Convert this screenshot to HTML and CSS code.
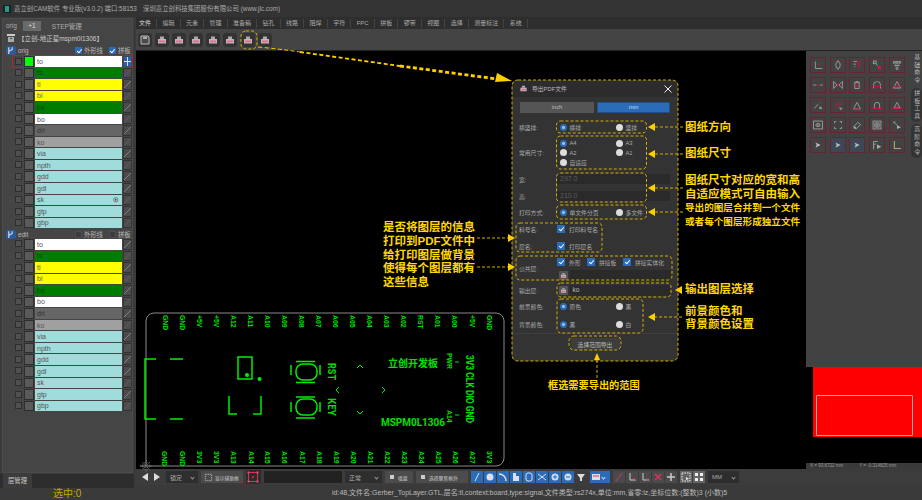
FILE: index.html
```html
<!DOCTYPE html>
<html lang="zh">
<head>
<meta charset="utf-8">
<title>嘉立创CAM软件</title>
<link rel="stylesheet" href="styles.css">
</head>
<body>
<svg class="defs" width="0" height="0">
  <symbol id="pr" viewBox="0 0 14 14">
    <path d="M5 3.500h4v2.500h-4z" fill="#aaa"/>
    <path d="M3 6h8v4.500h-8z" fill="#bbb"/>
    <path d="M4 7.500h6v1.800h-6z" fill="#e8688e"/>
  </symbol>
  <symbol id="cur" viewBox="0 0 16 16"><path d="M5 5l6 3-6 3 1.500-3z" fill="#bbb"/></symbol>
</svg>
<div class="app">
  <header class="title">
    <svg class="logo" viewBox="0 0 8 8"><rect width="8" height="8" fill="#123"/><rect x="2" y="1" width="4" height="6" fill="#2a9a7a"/></svg>
    <span class="t1">嘉立创CAM软件 专业版(v3.0.2) 端口:58153</span>
    <span>深圳嘉立创科技集团股份有限公司 (www.jlc.com)</span>
  </header>
  <div class="main">
    <aside class="left">
      <div class="panel">
        <div class="ptabs"><span>orig</span><b class="plus">+1</b><span>STEP管理</span></div>
        <div class="job">
          <svg class="job-ic" viewBox="0 0 8 8"><path d="M0 0h8v2H0z" fill="#ccc"/><path d="M1 3h6v5H1z" fill="#aaa"/><path d="M3 4h2v1H3z" fill="#444"/></svg>
          <span>【立创-地正星mspm0l1306】</span>
        </div>
        <div class="ghead">
          <i class="branch"><svg viewBox="0 0 8 8"><path d="M2.500 1v6M5.500 1v2L2.500 5" stroke="#dde" fill="none"/></svg></i>
          <span class="gname">orig</span>
          <i class="cb on"></i><span class="gl">外形线</span>
          <i class="cb on"></i><span class="gl">拼板</span>
        </div>
        <div class="layer sel"><i class="ck"></i><i class="sw lime"></i><span class="bar w">to</span><i class="rt grid"></i></div>
        <div class="layer"><i class="ck"></i><i class="sw"></i><span class="bar g">ts</span><i class="rt"></i></div>
        <div class="layer"><i class="ck"></i><i class="sw"></i><span class="bar y">tl</span><i class="rt"></i></div>
        <div class="layer"><i class="ck"></i><i class="sw"></i><span class="bar y">bl</span><i class="rt"></i></div>
        <div class="layer"><i class="ck"></i><i class="sw"></i><span class="bar g">bs</span><i class="rt"></i></div>
        <div class="layer"><i class="ck"></i><i class="sw"></i><span class="bar w">bo</span><i class="rt"></i></div>
        <div class="layer"><i class="ck"></i><i class="sw"></i><span class="bar d">drl</span><i class="rt"></i></div>
        <div class="layer"><i class="ck"></i><i class="sw"></i><span class="bar s">ko</span><i class="rt"></i></div>
        <div class="layer"><i class="ck"></i><i class="sw"></i><span class="bar c">via</span><i class="rt"></i></div>
        <div class="layer"><i class="ck"></i><i class="sw"></i><span class="bar c">npth</span><i class="rt"></i></div>
        <div class="layer"><i class="ck"></i><i class="sw"></i><span class="bar c">gdd</span><i class="rt"></i></div>
        <div class="layer"><i class="ck"></i><i class="sw"></i><span class="bar c">gdl</span><i class="rt"></i></div>
        <div class="layer"><i class="ck"></i><i class="sw"></i><span class="bar c"><span>sk</span><svg class="tgt" viewBox="0 0 6 6"><circle cx="3" cy="3" r="2.400" fill="none" stroke="#555" stroke-width=".7"/><circle cx="3" cy="3" r="1" fill="#555"/></svg></span><i class="rt"></i></div>
        <div class="layer"><i class="ck"></i><i class="sw"></i><span class="bar c">gtp</span><i class="rt"></i></div>
        <div class="layer"><i class="ck"></i><i class="sw"></i><span class="bar c">gbp</span><i class="rt"></i></div>
        <div class="ghead edit">
          <i class="branch"><svg viewBox="0 0 8 8"><path d="M2.500 1v6M5.500 1v2L2.500 5" stroke="#dde" fill="none"/></svg></i>
          <span class="gname">edit</span>
          <i class="cb"></i><span class="gl">外形线</span>
          <i class="cb"></i><span class="gl">拼板</span>
        </div>
        <div class="layer"><i class="ck"></i><i class="sw"></i><span class="bar w">to</span><i class="rt"></i></div>
        <div class="layer"><i class="ck"></i><i class="sw"></i><span class="bar g">ts</span><i class="rt"></i></div>
        <div class="layer"><i class="ck"></i><i class="sw"></i><span class="bar y">tl</span><i class="rt"></i></div>
        <div class="layer"><i class="ck"></i><i class="sw"></i><span class="bar y">bl</span><i class="rt"></i></div>
        <div class="layer"><i class="ck"></i><i class="sw"></i><span class="bar g">bs</span><i class="rt"></i></div>
        <div class="layer"><i class="ck"></i><i class="sw"></i><span class="bar w">bo</span><i class="rt"></i></div>
        <div class="layer"><i class="ck"></i><i class="sw"></i><span class="bar d">drl</span><i class="rt"></i></div>
        <div class="layer"><i class="ck"></i><i class="sw"></i><span class="bar s">ko</span><i class="rt"></i></div>
        <div class="layer"><i class="ck"></i><i class="sw"></i><span class="bar c">via</span><i class="rt"></i></div>
        <div class="layer"><i class="ck"></i><i class="sw"></i><span class="bar c">npth</span><i class="rt"></i></div>
        <div class="layer"><i class="ck"></i><i class="sw"></i><span class="bar c">gdd</span><i class="rt"></i></div>
        <div class="layer"><i class="ck"></i><i class="sw"></i><span class="bar c">gdl</span><i class="rt"></i></div>
        <div class="layer"><i class="ck"></i><i class="sw"></i><span class="bar c">sk</span><i class="rt"></i></div>
        <div class="layer"><i class="ck"></i><i class="sw"></i><span class="bar c">gtp</span><i class="rt"></i></div>
        <div class="layer"><i class="ck"></i><i class="sw"></i><span class="bar c">gbp</span><i class="rt"></i></div>
      </div>
      <div class="ltabs"><span class="ltab">层管理</span></div>
      <div class="count">选中:0</div>
    </aside>
    <div class="center">
      <nav class="tabs">
        <span class="tab first">文件</span><span class="tab">编辑</span><span class="tab">元素</span><span class="tab">管理</span><span class="tab">准备稿</span><span class="tab">钻孔</span><span class="tab">线路</span><span class="tab">阻焊</span><span class="tab">字符</span><span class="tab">FPC</span><span class="tab">拼板</span><span class="tab">锣带</span><span class="tab">视图</span><span class="tab">选择</span><span class="tab">测量标注</span><span class="tab">系统</span>
      </nav>
      <div class="tools">
        <span class="tbtn"><svg viewBox="0 0 14 14"><path d="M3 3h7l1 1v7H3z" fill="#4a4a4a" stroke="#bbb"/><path d="M5 3.500h4v2.500h-4z" fill="#aaa"/></svg></span>
        <span class="tbtn"><svg><use href="#pr"/></svg></span>
        <span class="tbtn"><svg><use href="#pr"/></svg></span>
        <span class="tbtn"><svg><use href="#pr"/></svg></span>
        <span class="tbtn"><svg><use href="#pr"/></svg></span>
        <span class="tbtn"><svg><use href="#pr"/></svg></span>
        <span class="tbtn far"><svg><use href="#pr"/></svg></span>
        <span class="tbtn"><svg><use href="#pr"/></svg></span>
      </div>
      <div class="work">
        <section class="canvas">
          <svg class="layer-svg" viewBox="136 51 670 418">
            <path class="outline" d="M146 466V321a8 8 0 0 1 8-8H496a8 8 0 0 1 8 8V458a8 8 0 0 1-8 8H140"/>
            <g class="gear"><circle cx="146" cy="466" r="3.500"/><path d="M146 460v12M140 466h12M142 462l8 8M150 462l-8 8"/></g>
            <g class="pin">
              <text transform="translate(163 315) rotate(90)">GND</text>
              <text transform="translate(180 315) rotate(90)">GND</text>
              <text transform="translate(197 315) rotate(90)">+5V</text>
              <text transform="translate(214 315) rotate(90)">+5V</text>
              <text transform="translate(231 315) rotate(90)">A12</text>
              <text transform="translate(248 315) rotate(90)">A11</text>
              <text transform="translate(265 315) rotate(90)">A10</text>
              <text transform="translate(282 315) rotate(90)">A09</text>
              <text transform="translate(299 315) rotate(90)">A08</text>
              <text transform="translate(316 315) rotate(90)">A07</text>
              <text transform="translate(333 315) rotate(90)">A06</text>
              <text transform="translate(350 315) rotate(90)">A05</text>
              <text transform="translate(367 315) rotate(90)">A04</text>
              <text transform="translate(384 315) rotate(90)">A03</text>
              <text transform="translate(401 315) rotate(90)">A02</text>
              <text transform="translate(418 315) rotate(90)">RST</text>
              <text transform="translate(435 315) rotate(90)">A01</text>
              <text transform="translate(452 315) rotate(90)">A00</text>
              <text transform="translate(470 315) rotate(90)">+5V</text>
              <text transform="translate(487 315) rotate(90)">GND</text>
              <text transform="translate(162 451) rotate(90)">GND</text>
              <text transform="translate(180 451) rotate(90)">GND</text>
              <text transform="translate(197 451) rotate(90)">3V3</text>
              <text transform="translate(214 451) rotate(90)">3V3</text>
              <text transform="translate(231 451) rotate(90)">A13</text>
              <text transform="translate(249 451) rotate(90)">A14</text>
              <text transform="translate(265 451) rotate(90)">A15</text>
              <text transform="translate(282 451) rotate(90)">A16</text>
              <text transform="translate(300 451) rotate(90)">A17</text>
              <text transform="translate(317 451) rotate(90)">A18</text>
              <text transform="translate(334 451) rotate(90)">A19</text>
              <text transform="translate(351 451) rotate(90)">A20</text>
              <text transform="translate(368 451) rotate(90)">A21</text>
              <text transform="translate(385 451) rotate(90)">A22</text>
              <text transform="translate(402 451) rotate(90)">A23</text>
              <text transform="translate(419 451) rotate(90)">A24</text>
              <text transform="translate(436 451) rotate(90)">A25</text>
              <text transform="translate(453 451) rotate(90)">A26</text>
              <text transform="translate(470 451) rotate(90)">A27</text>
              <text transform="translate(487 451) rotate(90)">3V3</text>
              <text transform="translate(447 353) rotate(90)">PWR</text>
              <text transform="translate(447 410) rotate(90)">A14</text>
            </g>
            <g class="silk">
              <path d="M156 359H145V419H156M170 359H183M170 419H183"/>
              <path d="M238 357H252V379H238Z"/>
              <path d="M229 396V414H237M261 396V414H253"/>
              <rect x="296" y="364" width="21" height="16" rx="7"/>
              <rect x="296" y="399" width="21" height="16" rx="7"/>
              <path d="M296 361.500H315M296 382.500H315M291 365V375M320 365V375M296 397H315M296 418H315M291 402V412M320 402V412"/>
              <path class="fine" d="M357 368l3-3 3 3M357 411l3 3 3-3M339 387l-3 3 3 3M382 387l3 3-3 3M455 362h4M455 415h4"/>
            </g>
            <circle class="dot" cx="247" cy="375" r="2"/>
            <circle class="dot" cx="259.500" cy="379" r="2"/>
            <text class="big cn" x="388" y="367">立创开发板</text>
            <text class="big" x="381" y="426" textLength="64" lengthAdjust="spacingAndGlyphs">MSPM0L1306</text>
            <text class="big" transform="translate(328 363) rotate(90)" textLength="17" lengthAdjust="spacingAndGlyphs">RST</text>
            <text class="big" transform="translate(328 398) rotate(90)" textLength="18" lengthAdjust="spacingAndGlyphs">KEY</text>
            <text class="big" transform="translate(466 355) rotate(90)" textLength="68" lengthAdjust="spacingAndGlyphs">3V3 CLK DIO GND</text>
          </svg>

          <div class="dialog">
            <div class="dtitle">
              <svg class="dic"><use href="#pr"/></svg>
              <span>导出PDF文件</span>
              <svg class="close" viewBox="0 0 8 8"><path d="M.5.500l7 7M7.500.500l-7 7" stroke="#eee"/></svg>
            </div>
            <div class="units"><span class="unit">inch</span><span class="unit active">mm</span></div>
            <div class="form">
              <div class="frow h16"><label>横竖排:</label><div class="opts"><span class="opt"><i class="rd on"></i>横排</span><span class="opt"><i class="rd"></i>竖排</span></div></div>
              <div class="frow h35"><label>常用尺寸:</label>
                <div class="opts tight">
                  <span class="opt"><i class="rd on"></i>A4</span><span class="opt"><i class="rd"></i>A3</span>
                  <span class="opt"><i class="rd"></i>A2</span><span class="opt"><i class="rd"></i>A1</span>
                  <span class="opt"><i class="rd"></i>自适应</span>
                </div>
              </div>
              <div class="frow h18"><label>宽:</label><div class="inp dim">297.0</div></div>
              <div class="frow h16"><label>高:</label><div class="inp dim">210.0</div></div>
              <div class="frow h17"><label>打印方式:</label><div class="opts"><span class="opt"><i class="rd on"></i>单文件分页</span><span class="opt"><i class="rd"></i>多文件</span></div></div>
              <div class="frow h16"><label>料号名:</label><div class="chk"><span class="opt"><i class="cb on"></i>打印料号名</span></div></div>
              <div class="frow h18"><label>层名:</label><div class="chk"><span class="opt"><i class="cb on"></i>打印层名</span></div></div>
              <div class="frow h27"><label>公共层:</label>
                <div class="stack">
                  <div class="chk three"><span class="opt"><i class="cb on"></i>外形</span><span class="opt"><i class="cb on"></i>拼接板</span><span class="opt"><i class="cb on"></i>拼接实体化</span></div>
                  <div class="pick"><svg class="dic2"><use href="#pr"/></svg><div class="inp"></div></div>
                </div>
              </div>
              <div class="frow h16"><label>输出层:</label><div class="pick"><svg class="dic2"><use href="#pr"/></svg><div class="inp">ko</div></div></div>
              <div class="frow h17"><label>前景颜色:</label><div class="opts"><span class="opt"><i class="rd on"></i>原色</span><span class="opt"><i class="rd"></i>黑</span></div></div>
              <div class="frow h18"><label>背景颜色:</label><div class="opts"><span class="opt"><i class="rd on"></i>黑</span><span class="opt"><i class="rd"></i>白</span></div></div>
            </div>
            <div class="dfoot"><button class="export">选择范围导出</button></div>
          </div>

          <svg class="layer-svg" viewBox="136 51 670 418">
            <g class="dash">
              <rect x="241" y="31" width="16" height="18" rx="5"/>
              <rect x="512" y="80" width="166" height="281" rx="6"/>
              <rect x="556.500" y="121" width="90" height="12" rx="4"/>
              <rect x="556.500" y="136" width="90" height="33" rx="4"/>
              <rect x="556.500" y="173" width="90" height="29" rx="4"/>
              <rect x="556.500" y="205" width="90" height="14" rx="4"/>
              <rect x="516" y="223" width="86" height="29" rx="4"/>
              <rect x="516" y="256" width="156" height="24" rx="4"/>
              <rect x="557" y="283" width="114" height="14" rx="4"/>
              <rect x="557" y="299" width="86" height="34" rx="4"/>
              <rect x="569" y="336" width="52" height="14" rx="5"/>
              <path d="M683 127H654M683 154H654M683 188H654M683 212H654M682 290H680M682 317H654M477 238H508M477 267H508M597 378V360"/>
            </g>
            <g class="arrow">
              <path d="M258 47Q280 49 300 52" class="a1"/>
              <path d="M300 52L400 66" class="a2"/>
              <path d="M400 66L497 79" class="a3"/>
            </g>
            <g class="head">
              <path d="M497 73L512 81L495 82Z"/>
              <path d="M648 127l7-4v8zM648 154l7-4v8zM648 188l7-4v8zM648 212l7-4v8zM675 290l7-4v8zM648 317l7-4v8z"/>
              <path d="M515 238l-7-4v8zM515 267l-7-4v8z"/>
              <path d="M597 353l-3 7h6z"/>
            </g>
            <g class="note">
              <text x="685" y="131">图纸方向</text>
              <text x="685" y="157">图纸尺寸</text>
              <text x="685" y="184">图纸尺寸对应的宽和高</text>
              <text x="685" y="198">自适应模式可自由输入</text>
              <text class="nsm" x="685" y="211">导出的图层合并到一个文件</text>
              <text class="nsm" x="685" y="225">或者每个图层形成独立文件</text>
              <text x="685" y="293">输出图层选择</text>
              <text x="685" y="315">前景颜色和</text>
              <text x="685" y="328">背景颜色设置</text>
              <text x="383" y="231">是否将图层的信息</text>
              <text x="383" y="245">打印到PDF文件中</text>
              <text x="383" y="259">给打印图层做背景</text>
              <text x="383" y="272">使得每个图层都有</text>
              <text x="383" y="286">这些信息</text>
              <text class="nmd" x="548" y="389">框选需要导出的范围</text>
            </g>
          </svg>
        </section>
        <aside class="right">
          <div class="rtop">
            <div class="rgrid">
              <span class="rb"><svg viewBox="0 0 16 16"><path class="l" d="M5 4v8h8"/><circle class="r" cx="9" cy="7" r="1"/></svg></span>
              <span class="rb"><svg viewBox="0 0 16 16"><ellipse class="l" cx="8" cy="8" rx="2.500" ry="4"/><path class="l" d="M8 2.500v2M8 11.500v2"/></svg></span>
              <span class="rb"><svg viewBox="0 0 16 16"><path class="l" d="M4 4h4M4 7h3M5 10h1"/><path class="rl" d="M9.500 13V4.500H13M9.500 8.500h3"/></svg></span>
              <span class="rb"><svg viewBox="0 0 16 16"><rect class="l" x="4" y="3.500" width="3" height="3"/><rect class="rf" x="9" y="9" width="3.500" height="3.500"/><path class="l" d="M7 7l2 2"/></svg></span>
              <span class="rb"><svg viewBox="0 0 16 16"><path class="l" d="M4 4h2v2H4zM7 4h2v2H7zM10 4h2v2h-2zM5.500 8h2v1h-2zM8.500 8h2v1h-2zM7 11h2v2H7z"/></svg></span>
              <span class="rb"><svg viewBox="0 0 16 16"><path class="l" d="M2.500 8h3.500M10 8h3.500"/><path class="rl" d="M6.500 8h3"/></svg></span>
              <span class="rb"><svg viewBox="0 0 16 16"><path class="l" d="M3 4v8l4-4zM13 4v8l-4-4z"/><circle class="r" cx="8" cy="8" r="1.300"/></svg></span>
              <span class="rb"><svg viewBox="0 0 16 16"><path class="l" d="M5 5h6M7 5V4h2v1M5.500 5v7h5V5"/><path class="rl" d="M7.200 7v3.500M8.800 7v3.500"/></svg></span>
              <span class="rb"><svg viewBox="0 0 16 16"><path class="l" d="M4 12V8a4 4 0 0 1 8 0v4"/><path class="rl" d="M3 9.500h10M8 3v2.500"/></svg></span>
              <span class="rb"><svg viewBox="0 0 16 16"><path class="l" d="M8 4l4 7.500H4z"/><path class="rl" d="M3.500 9.500h9M8 5.500v3"/></svg></span>
              <span class="rb"><svg viewBox="0 0 16 16"><path class="l" d="M4 12l4-5"/><path class="rl" d="M8 7l3-3.500"/><path class="l" d="M10 10l2.500 1.500-2.500 1z"/></svg></span>
              <span class="rb"><svg viewBox="0 0 16 16"><path class="rl" d="M4 10l6-6M6 12l6-6"/><path class="l" d="M10 11l2.500 1-1.500 1.500z"/></svg></span>
              <span class="rb"><svg viewBox="0 0 16 16"><path class="l" d="M4 12.500L8 5l4 7.500z"/><path class="rl" d="M4 12.500h8"/></svg></span>
              <span class="rb"><svg viewBox="0 0 16 16"><path class="l" d="M5 12V8a3 3 0 0 1 6 0v4"/><path class="rl" d="M3 12h10"/></svg></span>
              <span class="rb"><svg viewBox="0 0 16 16"><path class="l" d="M8 5l3.500 6.500h-7z"/><path class="rl" d="M3 12h10M8 7.500v2"/></svg></span>
              <span class="rb"><svg viewBox="0 0 16 16"><rect class="l" x="3" y="3.500" width="10" height="9"/><ellipse class="l" cx="8" cy="8" rx="2.500" ry="1.800"/><circle class="g" cx="8" cy="8" r=".9"/></svg></span>
              <span class="rb"><svg viewBox="0 0 16 16"><path class="l" d="M4 4h2M4 4v2M12 4h-2M12 4v2M4 12h2M4 12v-2M12 12h-2M12 12v-2"/></svg></span>
              <span class="rb"><svg viewBox="0 0 16 16"><path class="l" d="M4 10l5-5 3 2.500-5 5z"/><circle class="g" cx="5.500" cy="11" r="1.300"/></svg></span>
              <span class="rb"><svg viewBox="0 0 16 16"><rect class="l" x="3.500" y="3.500" width="9" height="9"/><path class="l" d="M5.500 5.500h5v5h-5zM8 5.500v5M5.500 8h5"/></svg></span>
              <span class="rb"><svg viewBox="0 0 16 16"><path class="l" d="M4 4.500l4 3.500M6 3.500L4 6"/><path d="M8 8l4.500 2.500L8 12.500z" class="g"/></svg></span>
              <span class="rb"><svg><use href="#cur"/></svg></span>
              <span class="rb blue"><svg><use href="#cur"/></svg></span>
              <span class="rb blue"><svg><use href="#cur"/></svg></span>
              <span class="rb"><svg viewBox="0 0 16 16"><path class="l" d="M4 4h5M4 7h3M4 10h1M4 4v9"/><path d="M8 7.500l5 2.500-5 2.500z" class="g"/></svg></span>
              <span class="rb"><svg viewBox="0 0 16 16"><path class="tan" d="M5 3.500v8.500h7.500"/></svg></span>
            </div>
            <div class="vtabs">
              <span class="vt plain">基础命令</span>
              <span class="vt">拼板工具</span>
              <span class="vt">高阶命令</span>
            </div>
          </div>
          <div class="mini"><div class="red"><div class="redbox"></div></div></div>
          <div class="coords"><span>X = 93.6722 mm</span><span>Y = -0.314825 mm</span></div>
        </aside>
      </div>
      <div class="btools">
        <div class="grp1">
          <span class="ib"><svg viewBox="0 0 12 12"><path d="M9 2v8L3 6z" fill="#ddd"/></svg></span>
          <span class="ib"><svg viewBox="0 0 12 12"><path d="M3 2v8l6-4z" fill="#ddd"/></svg></span>
        </div>
        <span class="combo w32">锁定<i class="ch"></i></span>
        <span class="gbtn w42"><svg class="sq" viewBox="0 0 10 10"><rect x="1.500" y="1.500" width="7" height="7" fill="none" stroke="#bbb" stroke-dasharray="1.500 1"/></svg>显示辅助框</span>
        <span class="ib redb"><svg viewBox="0 0 14 14"><rect x="2.500" y="2.500" width="9" height="9" fill="none" stroke="#e0305a"/><circle cx="7" cy="7" r="1" fill="#e0305a"/><path d="M1.500 1.500h2v2h-2zM10.500 1.500h2v2h-2zM1.500 10.500h2v2h-2zM10.500 10.500h2v2h-2z" fill="#f04070"/></svg></span>
        <span class="dark w78"></span>
        <span class="combo w37">正常<i class="ch"></i></span>
        <span class="gbtn w28"><i class="bx"></i>吸盘</span>
        <span class="gbtn w52"><i class="bx"></i>选择聚焦框外</span>
        <div class="grp">
          <span class="bl"><svg viewBox="0 0 12 12"><path d="M4 10l4-8" stroke="#dde" fill="none"/></svg></span>
          <span class="bl"><svg viewBox="0 0 12 12"><circle cx="6" cy="6" r="3.500" fill="#dde"/></svg></span>
          <span class="bl"><svg viewBox="0 0 12 12"><path d="M2 3c4 0 7 3 7 7" stroke="#dde" fill="none" stroke-width="1.500"/></svg></span>
          <span class="bl"><svg viewBox="0 0 12 12"><path d="M3 2h3v3h3v5H3z" fill="#dde"/></svg></span>
          <span class="bl"><svg viewBox="0 0 12 12"><rect x="3" y="2" width="6" height="8" rx="2" fill="none" stroke="#dde"/></svg></span>
          <span class="bl"><svg viewBox="0 0 12 12"><path d="M2 3l8 6M10 3L2 9" stroke="#dde" fill="none"/></svg></span>
          <span class="bl"><svg viewBox="0 0 12 12"><circle cx="6" cy="6" r="3.500" fill="#cde"/><path d="M4 6h4M6 4v4" stroke="#2b6cb8"/></svg></span>
          <span class="bl"><svg viewBox="0 0 12 12"><circle cx="6" cy="6" r="3.500" fill="#cde"/><path d="M4 6h4" stroke="#2b6cb8"/></svg></span>
          <span class="ib"><svg viewBox="0 0 12 12"><path d="M2 3h8L7 7v3H5V7z" fill="#ddd"/></svg></span>
        </div>
        <span class="wide"><svg viewBox="0 0 10 10"><rect x="1" y="2" width="8" height="6" fill="#ddd"/><path d="M2 4h6" stroke="#e0305a"/></svg><i class="ch lt"></i></span>
        <div class="grp">
          <span class="gb"><svg viewBox="0 0 12 12"><path d="M3 10l6-8" stroke="#c04060" fill="none"/></svg></span>
          <span class="gb"><svg viewBox="0 0 12 12"><path d="M4 2v7h6" stroke="#ccc" fill="none"/><path d="M7 7l3 2" stroke="#e0305a"/></svg></span>
          <span class="gb"><svg viewBox="0 0 12 12"><path d="M4 2v7h6" stroke="#ccc" fill="none"/><path d="M8 7v3" stroke="#e0305a"/></svg></span>
          <span class="gb"><svg viewBox="0 0 12 12"><path d="M3 3l6 6M9 3L3 9" stroke="#e0305a" stroke-width="1.500"/></svg></span>
          <span class="gb"><svg viewBox="0 0 12 12"><path d="M6 2v8M2 6h8" stroke="#ccc" stroke-width="1.500"/></svg></span>
        </div>
        <div class="grp">
          <span class="gb lite"><svg viewBox="0 0 12 12"><path d="M2 2h8v8H2z" fill="none" stroke="#eee" stroke-dasharray="1.500 1"/><path d="M6 6l3 2-3 1z" fill="#eee"/></svg></span>
          <span class="gb lite"><svg viewBox="0 0 12 12"><path d="M2 2h3v3H2zM7 2h3v3H7zM2 7h3v3H2zM7 7h3v3H7z" fill="#eee"/></svg></span>
        </div>
        <span class="combo w31">MM<i class="ch"></i></span>
      </div>
      <div class="status">id:48,文件名:Gerber_TopLayer.GTL,层名:tl,context:board,type:signal,文件类型:rs274x,单位:mm,省零:lz,坐标位数:(整数)3 (小数)5</div>
    </div>
  </div>
</div>
</body>
</html>
```
FILE: styles.css
```css
* { box-sizing: border-box; }
html, body { margin: 0; padding: 0; }
body {
  width: 922px; height: 500px; overflow: hidden; background: #3a3a3a;
  font-family: "Liberation Sans", "Noto Sans CJK SC", sans-serif; color: #bbb;
}
i { display: block; font-style: normal; }
svg { display: block; }
.defs { position: absolute; }
.app { width: 922px; height: 500px; display: flex; flex-direction: column; }

.title { height: 17px; background: #333; display: flex; align-items: center; padding-left: 3px; font-size: 6.400px; color: #aaa; }
.logo { width: 8px; height: 8px; margin-right: 3px; }
.t1 { width: 129px; }

.main { flex: 1; display: flex; min-height: 0; }
.left { width: 134px; display: flex; flex-direction: column; margin-right: 2px; background: #3a3a3a; }
.panel { height: 455px; margin: 1px 0 0 2px; width: 131px; border: 1px solid #4c4c4c; background: #454545; }

.ptabs { height: 13px; display: flex; align-items: center; padding-left: 3px; font-size: 6.500px; color: #aaa; }
.plus { width: 18px; height: 10px; background: #6a6a6a; color: #ddd; margin: 0 11px 0 6px; font-weight: normal; text-align: center; line-height: 10px; }
.job { height: 12px; display: flex; align-items: center; padding-left: 4px; font-size: 6.500px; color: #ccc; }
.job-ic { width: 8px; height: 8px; margin-right: 3px; }
.ghead { height: 12px; display: flex; align-items: center; padding-left: 3px; font-size: 6.300px; color: #bbb; }
.ghead.edit { height: 9.750px; }
.branch { width: 10px; height: 9px; background: #2c5a94; border-radius: 2px; margin-right: 2px; flex: none; }
.branch svg { width: 9px; height: 9px; }
.gname { width: 57px; flex: none; }
.gl { margin: 0 6px 0 2px; white-space: nowrap; }
.cb { width: 7px; height: 7px; background: #3c3c3c; border: 1px solid #4e4e4e; flex: none; position: relative; }
.cb.on { background: #2b6cb8; border-color: #2b6cb8; }
.cb.on::after { content: ""; position: absolute; left: 1.500px; top: .2px; width: 2px; height: 3.800px; border: solid #fff; border-width: 0 1px 1px 0; transform: rotate(40deg); }

.layer { height: 10.550px; margin: 0 0 1px 10px; width: 119px; padding-left: 2px; display: flex; }
.layer.sel { outline: 1px solid #a02a36; }
.ck { width: 7px; height: 7px; margin: 1.500px 2px 0 0; background: #505050; border: 1px solid #2e2e2e; flex: none; }
.sw { width: 10px; margin-right: 1px; background: #5a5a5a; border: 1px solid #2e2e2e; flex: none; }
.sw.lime { background: #00ff00; }
.bar { width: 86.500px; margin-right: 1px; display: flex; align-items: center; justify-content: space-between; padding: 0 3px 0 2px; font-size: 7px; color: #555; }
.w { background: #fff; } .g { background: #007c00; color: #0c4a0c; } .y { background: #ffff00; color: #666; }
.d { background: #666; color: #333; } .s { background: #a0a0a0; } .c { background: #a0dcdc; }
.tgt { width: 5.500px; height: 5.500px; }
.rt { width: 9px; background: linear-gradient(135deg, #4c4c4c 46%, #808080 50%, #4c4c4c 54%); border: 1px solid #333; flex: none; }
.rt.grid { background: linear-gradient(#dde, #dde) 50% 0/1px 100% no-repeat, linear-gradient(#dde, #dde) 0 50%/100% 1px no-repeat, #2b5fa8; border-color: #3a4b66; }

.ltabs { height: 14px; background: #2d2d2d; margin-top: 1px; }
.ltab { display: block; width: 29px; height: 14px; margin-left: 3px; background: #3c3c3c; text-align: center; font-size: 6.300px; line-height: 14px; color: #ccc; }
.count { flex: 1; padding-left: 53px; font-size: 10px; line-height: 12px; color: #c8a800; }

.center { flex: 1; min-width: 0; display: flex; flex-direction: column; }
.tabs { height: 12px; background: #2e2e2e; display: flex; align-items: center; }
.tab { padding: 0 5.250px; height: 9px; line-height: 9px; font-size: 6px; color: #aaa; border-right: 1px solid #444; white-space: nowrap; }
.tab.first { padding-left: 3px; color: #ddd; }
.tools { height: 22px; background: #444; display: flex; align-items: center; padding-left: 2px; gap: 3px; border-bottom: 1px solid #222; }
.tbtn { width: 14px; height: 14px; background: #333; border-radius: 3px; }
.tbtn svg { width: 14px; height: 14px; }
.tbtn.far { margin-left: 1px; }

.work { height: 418px; display: flex; }
.canvas { width: 670px; height: 418px; background: #000; position: relative; overflow: visible; }
.layer-svg { position: absolute; left: 0; top: 0; width: 670px; height: 418px; overflow: visible; pointer-events: none; }
.outline { fill: none; stroke: #8a8a8a; stroke-width: 1; }
.gear circle, .gear path { fill: none; stroke: #777; stroke-width: .8; stroke-dasharray: 1.500 .8; }
.pin text { font: bold 6.900px "Liberation Sans", sans-serif; fill: #00e000; }
.silk path, .silk rect { fill: none; stroke: #00ee00; stroke-width: 1.500; }
.silk .fine { stroke-width: 1; }
.dot { fill: #00ee00; }
.big { font: bold 10px Roboto, "Liberation Sans", sans-serif; fill: #00e000; }
.big.cn { font: bold 10px "Liberation Sans", "Noto Sans CJK SC", sans-serif; }

.dash rect, .dash path { fill: none; stroke: #d4b000; stroke-width: 1; stroke-dasharray: 3 2; }
.arrow path { fill: none; stroke: #ffd000; stroke-dasharray: 4 2.500; }
.a1 { stroke-width: 1; } .a2 { stroke-width: 1.800; } .a3 { stroke-width: 2.800; }
.head path { fill: #ffd000; }
.note text { font: bold 11.500px "Liberation Sans", "Noto Sans CJK SC", sans-serif; fill: #ffd900; }
.note .nsm { font-size: 9.600px; }
.note .nmd { font-size: 10.200px; }

.dialog { position: absolute; left: 376px; top: 29px; width: 166px; height: 281px; background: #333; border-radius: 5px; font-size: 5.800px; color: #aaa; }
.dtitle { height: 17px; background: #2c2c2c; border-radius: 5px 5px 0 0; display: flex; align-items: center; padding-left: 6px; color: #bbb; }
.dic { width: 11px; height: 11px; margin-right: 3px; }
.close { width: 8px; height: 8px; margin-left: auto; margin-right: 6px; }
.units { display: grid; grid-template-columns: 74px 73px; column-gap: 3px; padding: 5px 0 0 8px; height: 22px; }
.unit { height: 11px; background: #555; text-align: center; line-height: 11px; color: #bbb; }
.unit.active { background: #2b6cb8; color: #cde; border: 1px solid #1f4f8a; line-height: 9px; }
.form { padding: 0 0 0 7px; }
.frow { display: grid; grid-template-columns: 38px 1fr; align-items: center; padding-right: 8px; }
.h16 { height: 16px; } .h17 { height: 17px; } .h18 { height: 18px; } .h27 { height: 27px; } .h35 { height: 35px; }
.opts { display: grid; grid-template-columns: 56px 1fr; padding-left: 3px; }
.tight { row-gap: 2.500px; }
.opt { display: flex; align-items: center; height: 7px; }
.rd { width: 7px; height: 7px; border-radius: 50%; background: #ddd; margin-right: 2.500px; flex: none; }
.rd.on { background: radial-gradient(circle, #9cc0ec 0 1.300px, #2b6cb8 1.600px); }
.inp { height: 10px; background: #2a2a2a; padding-left: 3px; line-height: 10px; font-size: 6.500px; color: #bbb; }
.inp.dim { color: #5c5c5c; margin-right: 0; font-size: 7px; }
.chk { display: flex; padding-left: 0; }
.chk .cb { margin-right: 4px; width: 8px; height: 8px; }
.chk .opt { height: 9px; }
.three .opt:nth-child(1) { width: 30px; }
.three .opt:nth-child(2) { width: 36px; }
.stack { display: flex; flex-direction: column; }
.stack > * { height: 13px; align-items: center; }
.pick { display: flex; align-items: center; }
.dic2 { width: 9px; height: 9px; flex: none; margin: 0 1.500px 0 2px; background: #555; border-radius: 1px; }
.pick .inp { flex: 1; height: 11px; margin-right: -1px; }
.dfoot { height: 28px; border-top: 1px solid #3e3e3e; display: flex; justify-content: center; padding: 4px 0 0 0; }
.export { width: 49px; height: 12px; padding: 0; border: 0; background: #3d3d3d; color: #bbb; font: 5.800px "Liberation Sans", "Noto Sans CJK SC", sans-serif; }

.right { width: 116px; background: #424242; display: flex; flex-direction: column; }
.rtop { height: 316px; display: flex; position: relative; }
.rgrid { display: grid; grid-template-columns: repeat(5, 16px); grid-auto-rows: 16px; gap: 4px 3.700px; padding: 5.500px 0 0 4px; align-content: start; }
.rb { border: 1px solid #652530; display: block; }
.rb svg { width: 14px; height: 14px; }
.rb.blue { background: #3a4858; }
.l { fill: none; stroke: #aaa; stroke-width: .9; }
.g { fill: #aaa; }
.r { fill: #d81045; }
.rf { fill: #d81045; }
.rl { fill: none; stroke: #d81045; stroke-width: 1; }
.tan { fill: none; stroke: #b8a070; stroke-width: 1.300; }
.vtabs { width: 11px; margin-left: 6px; display: flex; flex-direction: column; gap: 2px; padding-top: 1px; }
.vt { writing-mode: vertical-rl; letter-spacing: 1.500px; font-size: 6px; color: #bbb; background: #343434; border-radius: 5px; width: 11px; text-align: center; line-height: 11px; padding: 2px 0; }
.vt.plain { background: none; }
.mini { height: 96px; background: #000; padding-left: 6.500px; }
.red { height: 70px; background: #ff0000; position: relative; }
.redbox { position: absolute; left: 3px; top: 28px; width: 97px; height: 41px; border: 1px solid #ff9a9a; border-radius: 1px; }
.coords { height: 6px; background: #3a3a3a; display: flex; gap: 16px; padding-left: 4px; font-size: 4.500px; line-height: 6px; color: #999; }

.btools { height: 16px; background: #3c3c3c; display: flex; align-items: center; gap: 3px; padding-left: 3px; }
.grp1 { display: flex; }
.ib { width: 12px; height: 12px; display: block; }
.ib svg { width: 12px; height: 12px; }
.redb { width: 15px; background: #2c2c2c; height: 14px; }
.redb svg { width: 14px; height: 14px; }
.combo { height: 12px; background: #2e2e2e; display: flex; align-items: center; justify-content: space-between; padding: 0 4px; font-size: 6px; color: #aaa; }
.ch { width: 3px; height: 3px; border: solid #999; border-width: 0 1px 1px 0; transform: rotate(45deg); }
.ch.lt { border-color: #cde; }
.w32 { width: 32px; } .w37 { width: 37px; } .w31 { width: 31px; }
.gbtn { height: 12px; background: #4c4c4c; display: flex; align-items: center; gap: 2px; padding-left: 3px; font-size: 4.800px; color: #ccc; white-space: nowrap; overflow: hidden; }
.w42 { width: 42px; } .w28 { width: 28px; } .w52 { width: 52px; }
.sq { width: 9px; height: 9px; flex: none; }
.bx { width: 4px; height: 4px; background: #ccc; flex: none; margin: 0 2px; }
.dark { height: 12px; background: #222; }
.w78 { width: 78px; }
.grp { display: flex; gap: 1px; }
.bl { width: 12px; height: 12px; background: #2b6cb8; display: block; }
.bl svg, .gb svg { width: 12px; height: 12px; }
.wide { width: 20px; height: 12px; background: #2b6cb8; display: flex; align-items: center; gap: 1px; padding-left: 1px; }
.wide svg { width: 10px; height: 10px; }
.gb { width: 12px; height: 12px; background: #4a4a4a; display: block; }
.gb.lite { background: #666; }
.status { height: 15px; background: #3a3a3a; padding-left: 196px; font-size: 7px; line-height: 15px; color: #bbb; white-space: nowrap; }
```
